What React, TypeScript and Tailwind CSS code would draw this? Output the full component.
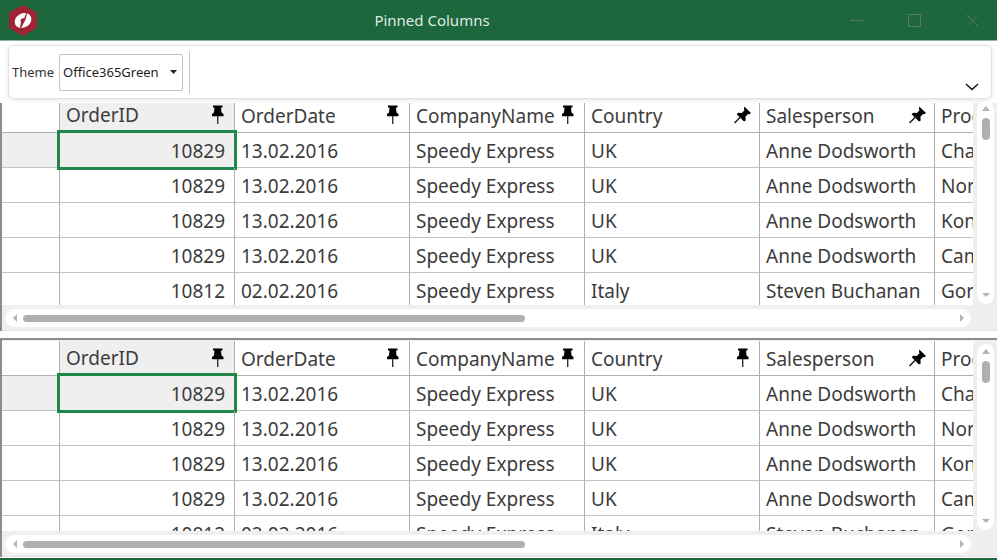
import React from "react";

type Order = {
  id: number;
  date: string;
  company: string;
  country: string;
  seller: string;
  product: string;
};

const orders: Order[] = [
  { id: 10829, date: "13.02.2016", company: "Speedy Express", country: "UK", seller: "Anne Dodsworth", product: "Chang" },
  { id: 10829, date: "13.02.2016", company: "Speedy Express", country: "UK", seller: "Anne Dodsworth", product: "Northwoods" },
  { id: 10829, date: "13.02.2016", company: "Speedy Express", country: "UK", seller: "Anne Dodsworth", product: "Konbu" },
  { id: 10829, date: "13.02.2016", company: "Speedy Express", country: "UK", seller: "Anne Dodsworth", product: "Camembert" },
  { id: 10812, date: "02.02.2016", company: "Speedy Express", country: "Italy", seller: "Steven Buchanan", product: "Gorgonzola" },
];

const columns = ["OrderID", "OrderDate", "CompanyName", "Country", "Salesperson", "ProductName"];

function Pin({ pinned }: { pinned: boolean }) {
  return pinned ? (
    <svg width="20" height="20" viewBox="0 0 20 20" aria-hidden="true">
      <path d="M6 .5h9.500v2h-1.500l.5 5 2 1.500v2.200H5V9l2-1.500.5-5H6z" fill="#000" />
      <path d="M10.700 11v8" stroke="#333" strokeWidth="1.400" />
    </svg>
  ) : (
    <svg width="20" height="20" viewBox="0 0 20 20" aria-hidden="true">
      <path d="M12.300 1.500L19 8l-1.800 1.200-1.200-.3-2.600 2.900.3 3.600-1.700 1.200L4.700 9.300l1.500-1.500 3.700.2 2.600-2.700-.5-1.300z" fill="#000" />
      <path d="M9 11.500L2.500 18" stroke="#222" strokeWidth="1.600" />
    </svg>
  );
}

function Arrow({ points }: { points: string }) {
  return (
    <svg width="8" height="8" viewBox="0 0 8 8" aria-hidden="true">
      <polygon points={points} fill="#b4b4b4" />
    </svg>
  );
}

function Grid({ name, pinned, className, bodyClass }: { name: string; pinned: number; className: string; bodyClass: string }) {
  return (
    <section aria-label={name} className={`flex flex-col overflow-hidden border-l-2 border-l-[#8c8c8c] bg-[#efefef] ${className}`}>
      <div className={`flex min-h-0 flex-1 ${bodyClass}`}>
        <div className="min-w-0 flex-1 overflow-hidden bg-white">
          <table className="w-[1108px] table-fixed border-separate border-spacing-0 text-[19px] leading-6 text-[#3c3c3c]">
            <colgroup>
              <col className="w-[58px]" />
              {columns.map((c) => (
                <col key={c} className="w-[175px]" />
              ))}
            </colgroup>
            <thead>
              <tr className="h-[35px]">
                <th aria-label="Row" className="border-r border-b border-[#b0b0b0] p-0" />
                {columns.map((c, i) => (
                  <th key={c} scope="col" className={`border-r border-b border-[#b0b0b0] p-0 font-normal ${i === 0 ? "bg-[#efefef]" : "bg-white"}`}>
                    <div className="flex items-center justify-between pr-[7px] pl-[6px]">
                      <span className={i === 0 ? "" : "pt-[2px]"}>{c}</span>
                      <button type="button" aria-label={`Pin ${c}`} className="h-5 w-5">
                        <Pin pinned={i < pinned} />
                      </button>
                    </div>
                  </th>
                ))}
              </tr>
            </thead>
            <tbody>
              {orders.map((o, r) => (
                <tr key={r} className="h-[35px]">
                  <td className={`border-r border-b border-[#c4c4c4] border-r-[#b0b0b0] p-0 ${r === 0 ? "bg-[#efefef]" : ""}`} />
                  <td className={`relative border-r border-b border-[#c4c4c4] border-r-[#b0b0b0] pt-[2px] pr-[9px] pb-0 pl-0 text-right ${r === 0 ? "bg-[#efefef]" : ""}`}>
                    {o.id}
                    {r === 0 && <span className="absolute -top-[3px] -right-[3px] -bottom-[3px] -left-[3px] border-[3px] border-[#21864a]" />}
                  </td>
                  {[o.date, o.company, o.country, o.seller, o.product].map((v, i) => (
                    <td key={i} className="border-r border-b border-[#c4c4c4] border-r-[#b0b0b0] pt-[2px] pr-0 pb-0 pl-[6px] whitespace-nowrap">
                      {v}
                    </td>
                  ))}
                </tr>
              ))}
            </tbody>
          </table>
        </div>
        <div className="w-6 pt-[3px] pr-[3px] pb-px pl-1">
          <div className="flex h-full flex-col items-center rounded-full bg-white py-1">
            <button type="button" aria-label="Scroll up" className="h-2 w-2">
              <Arrow points="4,1 8,6 0,6" />
            </button>
            <div className="mt-[5px] h-[22px] w-2 rounded-full bg-[#b0b0b0]" />
            <button type="button" aria-label="Scroll down" className="mt-auto h-2 w-2">
              <Arrow points="0,1 8,1 4,5" />
            </button>
          </div>
        </div>
      </div>
      <div className="h-[26px] border-b border-[#e3e3e3] pt-1 pr-[26px] pb-[3px] pl-[3px]">
        <div className="flex h-full items-center rounded-full bg-white px-[6px]">
          <button type="button" aria-label="Scroll left" className="h-2 w-2">
            <Arrow points="6,0 6,8 2,4" />
          </button>
          <div className="mx-1 flex-1">
            <div className="h-[7px] w-[54%] rounded-full bg-[#b0b0b0]" />
          </div>
          <button type="button" aria-label="Scroll right" className="h-2 w-2">
            <Arrow points="3,0 3,8 7,4" />
          </button>
        </div>
      </div>
    </section>
  );
}

export default function App() {
  return (
    <div className="flex h-screen flex-col overflow-hidden border-b-2 border-[#1c673b] bg-white font-['Noto_Sans','Open_Sans',sans-serif]">
      <header className="flex h-[41px] shrink-0 items-center border-b border-[#8ab39b] bg-[#1c673b] text-[#5f7866]">
        <div className="flex w-[37px] shrink-0 justify-end">
          <svg width="28" height="31" viewBox="0 0 28 31" aria-hidden="true">
            <path d="M14 0l14 7.500v15.500L14 31 0 23V7.500z" fill="#9e2433" />
            <ellipse cx="14" cy="15.500" rx="8.800" ry="7" transform="rotate(-30 14 15.500)" fill="#fff" />
            <path d="M18.500 7.500C17 11 17.500 14 15 17.500c-1 1.500-1.500 3-3 6l-1-.5c.5-2.500.3-4 1.200-6 .9-1.900 2.300-2.600 3.300-4.500.8-1.600 1.200-3.500 2-5.200z" fill="#9e2433" />
            <path d="M11.500 15c1-1.500 2.500-2 3.500-1.500-.2 2-1 3.500-3 4.500z" fill="#9e2433" />
          </svg>
        </div>
        <h1 className="flex-1 text-center text-[15px] leading-5 text-[#dfeae3]">Pinned Columns</h1>
        <button type="button" aria-label="Minimize" className="flex w-[58px] justify-center">
          <svg width="13" height="13" viewBox="0 0 13 13" fill="none" stroke="currentColor"><path d="M0 6.500h13" /></svg>
        </button>
        <button type="button" aria-label="Maximize" className="flex w-[58px] justify-center">
          <svg width="13" height="13" viewBox="0 0 13 13" fill="none" stroke="currentColor"><path d="M.5.5h12v12H.5z" /></svg>
        </button>
        <button type="button" aria-label="Close" className="flex w-[54px] justify-center pl-1">
          <svg width="13" height="13" viewBox="0 0 13 13" fill="none" stroke="currentColor"><path d="M1 1l11 11M12 1L1 12" /></svg>
        </button>
      </header>
      <div className="shrink-0 px-[5px] pt-1 pb-1 pl-2">
        <div className="flex h-[54px] items-center rounded-md border border-[#e2e2e2] pr-3 pl-[3px] shadow-[0_1px_4px_rgba(0,0,0,0.12)]">
          <label htmlFor="theme" className="w-[47px] text-[13px] leading-5 text-[#333]">Theme</label>
          <div className="flex items-center">
            <div className="relative">
              <select id="theme" defaultValue="Office365Green" className="h-[37px] w-[124px] appearance-none rounded-xs border border-[#c3c3c3] bg-white pt-[2px] pl-[3px] text-[13px] text-[#222]">
                <option>Office365Green</option>
              </select>
              <svg className="pointer-events-none absolute top-4 right-[6px]" width="7" height="4" viewBox="0 0 7 4" aria-hidden="true">
                <polygon points="0,0 7,0 3.500,4" fill="#222" />
              </svg>
            </div>
            <div className="ml-[6px] h-[43px] w-px bg-[#c8c8c8]" />
          </div>
          <button type="button" aria-label="Expand ribbon" className="mt-[30px] ml-auto">
            <svg width="14" height="8" viewBox="0 0 14 8" fill="none" stroke="#111" strokeWidth="1.500"><path d="M1 1l6 5.500L13 1" /></svg>
          </button>
        </div>
      </div>
      <main className="flex min-h-0 flex-1 flex-col gap-[7px] pb-px">
        <Grid name="Orders, three pinned columns" pinned={3} className="h-[228px] shrink-0" bodyClass="-mt-[5px]" />
        <Grid name="Orders, four pinned columns" pinned={4} className="min-h-0 flex-1 border-t-2 border-t-[#8c8c8c]" bodyClass="mt-px" />
      </main>
    </div>
  );
}
